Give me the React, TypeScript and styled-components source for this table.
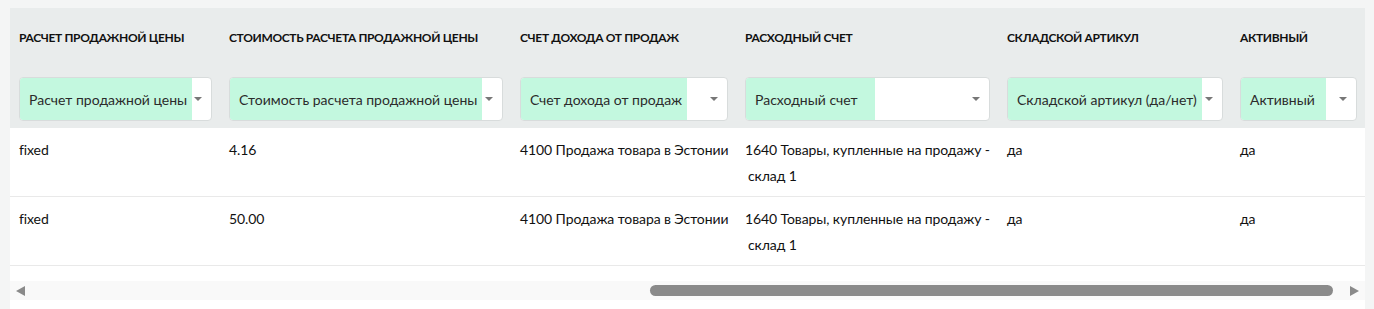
import styled, { createGlobalStyle } from "styled-components";

const GlobalStyle = createGlobalStyle`
  html, body {
    margin: 0;
    padding: 0;
    background: #f4f5f5;
    font-family: "Source Sans Pro", Lato, "Noto Sans", sans-serif;
  }
`;

type Column = {
  title: string;
  width: number;
  placeholder: string;
  fill: number;
};

const columns: Column[] = [
  { title: "Расчет продажной цены", width: 210, placeholder: "Расчет продажной цены", fill: 172 },
  { title: "Стоимость расчета продажной цены", width: 291, placeholder: "Стоимость расчета продажной цены", fill: 252 },
  { title: "Счет дохода от продаж", width: 225, placeholder: "Счет дохода от продаж", fill: 166 },
  { title: "Расходный счет", width: 262, placeholder: "Расходный счет", fill: 129 },
  { title: "Складской артикул", width: 233, placeholder: "Складской артикул (да/нет)", fill: 194 },
  { title: "Активный", width: 134, placeholder: "Активный", fill: 85 },
];

// each cell is a list of lines, the account name wraps onto a second line
const rows: string[][][] = [
  [["fixed"], ["4.16"], ["4100 Продажа товара в Эстонии"], ["1640 Товары, купленные на продажу -", "склад 1"], ["да"], ["да"]],
  [["fixed"], ["50.00"], ["4100 Продажа товара в Эстонии"], ["1640 Товары, купленные на продажу -", "склад 1"], ["да"], ["да"]],
];

const gridTemplate = columns.map((c) => `${c.width}px`).join(" ");

const Page = styled.div`
  padding: 8px 9px 0 10px;
`;

const Panel = styled.div`
  background: #fff;
  overflow: hidden;
  height: 301px;
`;

const Row = styled.div<{ $head?: boolean }>`
  display: grid;
  grid-template-columns: ${gridTemplate};
  background: ${(p) => (p.$head ? "#e9ecec" : "#fff")};
  border-bottom: ${(p) => (p.$head ? "none" : "1px solid #e9e9e9")};
`;

const HeadCell = styled.div`
  padding: 22px 8px 7px 9px;
  display: flex;
  flex-direction: column;
  gap: 31px;
  min-width: 0;
`;

const Title = styled.div`
  font-size: 12px;
  line-height: 16px;
  font-weight: 700;
  letter-spacing: -0.35px;
  text-transform: uppercase;
  color: #111;
  white-space: nowrap;
`;

const Select = styled.div`
  height: 44px;
  box-sizing: border-box;
  border: 1px solid #d8dcdc;
  border-radius: 4px;
  background: #fff;
  display: flex;
  align-items: center;
  overflow: hidden;
`;

const SelectValue = styled.div<{ $fill: number }>`
  width: ${(p) => p.$fill}px;
  align-self: stretch;
  display: flex;
  align-items: center;
  padding-left: 9px;
  box-sizing: border-box;
  background: #c3f8df;
  font-size: 14px;
  color: #2b2b2b;
  white-space: nowrap;
`;

const Caret = styled.span`
  margin-left: auto;
  margin-right: 9px;
  width: 0;
  height: 0;
  border-left: 4px solid transparent;
  border-right: 4px solid transparent;
  border-top: 4px solid #777;
`;

const Cell = styled.div`
  padding: 9px 8px 0 9px;
  height: 68px;
  box-sizing: border-box;
  font-size: 14px;
  line-height: 26px;
  color: #111;
  white-space: nowrap;
  letter-spacing: -0.1px;
`;

const Line = styled.div<{ $indent?: boolean }>`
  padding-left: ${(p) => (p.$indent ? "3px" : "0")};
`;

const ScrollBar = styled.div`
  margin-top: 15px;
  height: 19px;
  background: #f9f9f9;
  display: flex;
  align-items: center;
  padding: 0 6px;
`;

const Arrow = styled.span<{ $dir: "left" | "right" }>`
  width: 0;
  height: 0;
  border-top: 5px solid transparent;
  border-bottom: 5px solid transparent;
  ${(p) =>
    p.$dir === "left"
      ? "border-right: 9px solid #8a8a8a;"
      : "border-left: 9px solid #8a8a8a;"}
`;

const Track = styled.div`
  flex: 1;
  height: 11px;
  margin: 0 17px 0 15px;
  position: relative;
`;

const Thumb = styled.div`
  position: absolute;
  top: 0;
  height: 11px;
  border-radius: 6px;
  background: #8a8a8a;
`;

export default function App() {
  const thumbStart = 0.4718;
  const thumbSize = 0.5282;
  return (
    <>
      <GlobalStyle />
      <Page>
        <Panel>
          <Row $head>
            {columns.map((c) => (
              <HeadCell key={c.title}>
                <Title>{c.title}</Title>
                <Select>
                  <SelectValue $fill={c.fill}>{c.placeholder}</SelectValue>
                  <Caret />
                </Select>
              </HeadCell>
            ))}
          </Row>
          {rows.map((r, i) => (
            <Row key={i}>
              {r.map((lines, j) => (
                <Cell key={j}>
                  {lines.map((l, k) => (
                    <Line key={k} $indent={k > 0}>
                      {l}
                    </Line>
                  ))}
                </Cell>
              ))}
            </Row>
          ))}
          <ScrollBar>
            <Arrow $dir="left" />
            <Track>
              <Thumb style={{ left: `${thumbStart * 100}%`, width: `${thumbSize * 100}%` }} />
            </Track>
            <Arrow $dir="right" />
          </ScrollBar>
        </Panel>
      </Page>
    </>
  );
}
